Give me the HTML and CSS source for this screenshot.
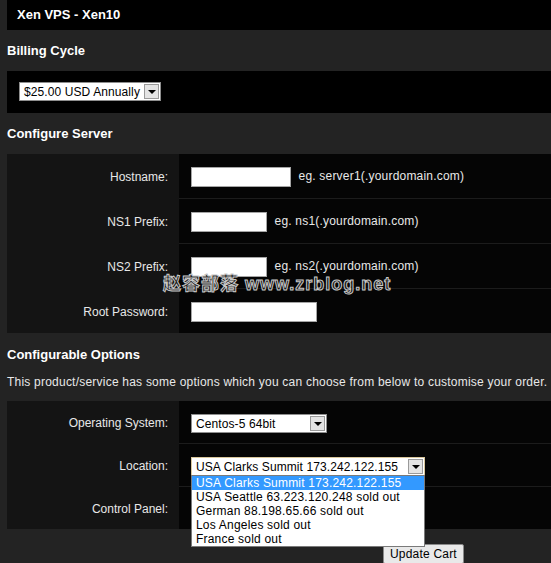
FILE: index.html
```html
<!DOCTYPE html>
<html>

<head>
  <meta charset="UTF-8">
  <title>Configure Product</title>
  <link rel="stylesheet" href="styles.css">
</head>

<body>
  <div class="container">
    <div class="product-box"><strong>Xen VPS - Xen10</strong></div>

    <h3>Billing Cycle</h3>
    <div class="box billing">
      <span class="select" style="width: 142px">
        <span class="select-text">$25.00 USD Annually</span>
        <span class="select-arrow"></span>
      </span>
    </div>

    <h3>Configure Server</h3>
    <table class="config">
      <tr>
        <td class="fieldlabel">Hostname:</td>
        <td class="fieldarea"><input type="text" class="input-long"> eg. server1(.yourdomain.com)</td>
      </tr>
      <tr>
        <td class="fieldlabel">NS1 Prefix:</td>
        <td class="fieldarea"><input type="text" class="input-short"> eg. ns1(.yourdomain.com)</td>
      </tr>
      <tr>
        <td class="fieldlabel">NS2 Prefix:</td>
        <td class="fieldarea"><input type="text" class="input-short"> eg. ns2(.yourdomain.com)</td>
      </tr>
      <tr>
        <td class="fieldlabel">Root Password:</td>
        <td class="fieldarea"><input type="password" class="input-pass"></td>
      </tr>
    </table>

    <h3 class="options-title">Configurable Options</h3>
    <p class="intro">This product/service has some options which you can choose from below to customise your order.</p>

    <table class="config options">
      <tr>
        <td class="fieldlabel">Operating System:</td>
        <td class="fieldarea">
          <span class="select" style="width: 136px">
            <span class="select-text">Centos-5 64bit</span>
            <span class="select-arrow"></span>
          </span>
        </td>
      </tr>
      <tr>
        <td class="fieldlabel">Location:</td>
        <td class="fieldarea">
          <span class="select focused" style="width: 234px">
            <span class="select-text">USA Clarks Summit 173.242.122.155</span>
            <span class="select-arrow"></span>
            <ul class="dropdown">
              <li class="selected">USA Clarks Summit 173.242.122.155</li>
              <li>USA Seattle 63.223.120.248 sold out</li>
              <li>German 88.198.65.66 sold out</li>
              <li>Los Angeles sold out</li>
              <li>France sold out</li>
            </ul>
          </span>
        </td>
      </tr>
      <tr>
        <td class="fieldlabel">Control Panel:</td>
        <td class="fieldarea"></td>
      </tr>
    </table>

    <div class="actions">
      <button>Update Cart</button>
    </div>

    <div class="watermark">赵容部落 www.zrblog.net</div>
  </div>
</body>

</html>
```

FILE: styles.css
```css
body {
  margin: 0;
  font-family: "Liberation Sans", Arial, sans-serif;
  font-size: 12px;
  color: #fff;
  background-color: #232323;
}

.container {
  position: relative;
  padding-left: 7px;
  height: 563px;
  overflow: hidden;
}

.product-box {
  background-color: #000;
  height: 30px;
  line-height: 30px;
  padding-left: 10px;
  font-size: 13px;
}

h3 {
  margin: 0;
  padding: 13px 0;
  font-size: 13px;
  line-height: 15px;
  color: #fff;
}

.box {
  background-color: #000;
}

.billing {
  padding: 11px 12px;
  height: 20px;
}

/* fake select, xp style */
.select {
  position: relative;
  display: inline-block;
  box-sizing: border-box;
  height: 19px;
  background-color: #fff;
  border: 1px solid #8e8e8e;
  color: #000;
  vertical-align: middle;
}

.select.focused {
  border-color: #d9c79c;
}

.select-text {
  display: block;
  padding-left: 4px;
  line-height: 18px;
  white-space: nowrap;
  font-size: 12px;
  letter-spacing: 0.1px;
}

.select-arrow {
  position: absolute;
  top: 1px;
  right: 1px;
  width: 13px;
  height: 13px;
  border: 1px solid #9a9a9a;
  background-color: #e4e4e4;
}

.select-arrow::after {
  content: "";
  position: absolute;
  left: 3px;
  top: 5px;
  border-left: 4px solid transparent;
  border-right: 4px solid transparent;
  border-top: 4px solid #000;
}

.dropdown {
  position: absolute;
  left: -1px;
  top: 17px;
  width: 234px;
  box-sizing: border-box;
  margin: 0;
  padding: 0;
  list-style: none;
  background-color: #fff;
  border: 1px solid #7a7a7a;
  z-index: 2;
}

.dropdown li {
  height: 14px;
  line-height: 14px;
  padding-left: 4px;
  font-size: 12px;
  letter-spacing: 0.2px;
  white-space: nowrap;
}

.dropdown li.selected {
  background-color: #3399ff;
  color: #fff;
}

.config {
  width: 100%;
  border-collapse: collapse;
  letter-spacing: 0.2px;
}

.config td {
  height: 43px;
  padding: 1px 0 0;
  border-bottom: 1px solid #1c1c1c;
}

.config tr:last-child td {
  border-bottom: none;
}

.config .fieldlabel {
  width: 161px;
  padding-right: 11px;
  text-align: right;
  letter-spacing: 0;
  background-color: #141414;
  color: #e8e8e8;
  border-bottom-color: #141414;
}

.config .fieldarea {
  padding-left: 12px;
  background-color: #050505;
  color: #e8e8e8;
}

.config input {
  box-sizing: border-box;
  height: 20px;
  margin: 0 4px 0 0;
  border: 1px solid #a5a5a5;
  background-color: #fff;
  vertical-align: middle;
}

.input-long {
  width: 100px;
}

.input-short {
  width: 76px;
}

.input-pass {
  width: 126px;
}

.options-title {
  padding: 14px 0 5px;
}

.intro {
  margin: 0;
  padding: 7px 0 11px;
  line-height: 16px;
  color: #e8e8e8;
  letter-spacing: 0.22px;
  white-space: nowrap;
}

.options td {
  height: 40px;
  padding-top: 2px;
}

.actions {
  padding: 15px 0 0 376px;
}

.actions button {
  height: 20px;
  padding: 0 6px;
  font-family: "Liberation Sans", Arial, sans-serif;
  font-size: 12px;
  letter-spacing: 0.2px;
  white-space: nowrap;
  color: #000;
  background-color: #e9e9e9;
  border: 1px solid #8a8a8a;
  border-radius: 2px;
}

.watermark {
  position: absolute;
  left: 163px;
  top: 269px;
  font-family: "Liberation Sans", "Noto Sans CJK SC", sans-serif;
  font-weight: bold;
  font-size: 18px;
  letter-spacing: 1px;
  color: #1a1a1a;
  -webkit-text-stroke: 1px #c8c8c8;
  white-space: nowrap;
}
```
